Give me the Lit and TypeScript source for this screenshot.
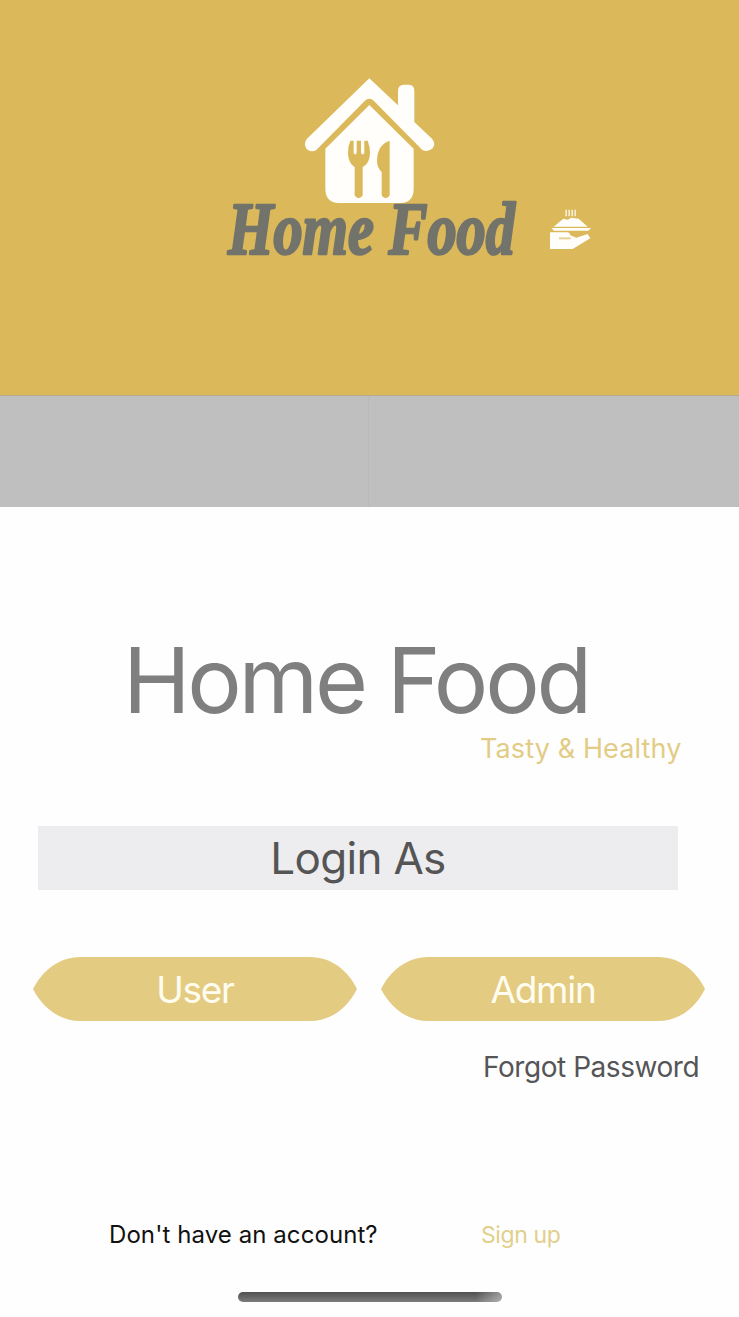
import { LitElement, html, css } from "lit";
import { customElement } from "lit/decorators.js";

@customElement("app-root")
export class AppRoot extends LitElement {
  static styles = css`
    :host { display: block; width: 739px; height: 1317px; overflow: hidden; background: #fefefe; font-family: Inter, "Liberation Sans", sans-serif; }
    * { box-sizing: border-box; }
    .screen { display: flex; flex-direction: column; height: 1317px; }
    .hero { height: 395px; background: #dbb85a; flex: none; }
    .hero svg { display: block; }
    .wordmark { font-family: "Liberation Serif", serif; font-weight: 700; font-style: italic; font-size: 74px; }
    .tabs { display: grid; grid-template-columns: 369px 1fr; height: 112px; flex: none; border-top: 1px solid #b3aa91; background: #bfbfbf; }
    .tab:first-child { border-right: 1px solid #bababa; }
    .main { display: flex; flex-direction: column; white-space: nowrap; }
    h1 { margin: 133px 0 0 123px; height: 80px; line-height: 80px; font-size: 91px; font-weight: 400; color: #7e7f7e; letter-spacing: -3.3px; }
    .tagline { margin: 13px 0 0 480px; height: 32px; line-height: 32px; font-size: 27px; color: #e2cc85; letter-spacing: 0.12px; }
    .login { margin: 61px 0 0 38px; width: 640px; height: 64px; line-height: 65px; background: #ededef; color: #555; font-size: 44px; text-align: center; letter-spacing: -0.7px; }
    .choices { display: flex; gap: 24px; margin: 67px 0 0 33px; }
    button { width: 324px; height: 64px; padding: 0; border: 0; background: #e4cb82; color: #fffdf0; font: 400 37px/65px Inter, "Liberation Sans", sans-serif; letter-spacing: -1.3px; clip-path: path("M0 32C9 14 26 0 47 0H277C299 0 315 14 324 32C315 50 299 64 277 64H47C26 64 9 50 0 32Z"); }
    .forgot { margin: 28px 0 0 483px; height: 36px; line-height: 36px; font-size: 28px; color: #555557; letter-spacing: -0.45px; }
    .account { display: flex; margin: 134px 0 0 109px; height: 32px; line-height: 32px; font-size: 24px; color: #111; }
    .question { width: 372px; letter-spacing: 0.08px; }
    .signup { color: #e2cf8b; font-size: 23px; letter-spacing: -0.4px; }
    .home { margin: 41px 0 0 238px; width: 264px; height: 10px; border-radius: 5px; background: linear-gradient(90deg, transparent 90%, #ffffff66), linear-gradient(#505050, #7c7c7c); }
  `;

  render() {
    return html`
      <div class="screen">
        <header class="hero">
          <svg width="739" height="395" viewBox="0 0 739 395" role="img" aria-label="Home Food logo">
            <g transform="translate(290 70) scale(.33333)" fill="#fffefa">
              <path d="M238 25L324 106V62Q324 44 342 44H356Q373 44 373 62V156L426 206Q438 220 428 235Q414 248 397 240L252 93Q238 79 224 93L79 240Q63 249 50 237Q39 221 51 206Z"/>
              <path d="M238 105L371 236V355Q371 399 332 399H146Q106 399 106 355V236Z"/>
              <g fill="#dbb85a">
                <path d="M181 212H233Q240 229 240 250Q239 281 218 291V376Q215 384 206 385Q197 384 194 376V291Q176 281 174 252Q173 230 181 212Z"/>
                <path d="M299 212V376Q296 384 287 385Q278 384 275 376V306Q261 292 261 272Q262 224 299 212Z"/>
              </g>
              <path d="M191 209H200V250Q195 257 191 250ZM213 209H223V250Q218 257 213 250Z"/>
            </g>
            <text class="wordmark" x="228" y="254" textLength="287" lengthAdjust="spacingAndGlyphs" fill="#72736b" stroke="#72736b" stroke-width="2.6" stroke-linejoin="round">Home Food</text>
            <g transform="translate(540 200) scale(.33333)" fill="#fffefa">
              <path d="M76 29H81V49H76ZM85 29H90V49H85ZM94 29H99V49H94ZM103 29H108V49H103Z" opacity=".75"/>
              <path d="M41 80L70 56L83 59L94 53L116 56L143 80ZM34 84H153L145 92H42ZM30 97H83Q91 99 91 106L109 113L143 102L151 115L98 147H30Z"/>
              <path d="M57 112H92V118H57Z" fill="#dbb85a" opacity=".65"/>
            </g>
          </svg>
        </header>
        <div class="tabs"><div class="tab"></div><div class="tab"></div></div>
        <main class="main">
          <h1>Home Food</h1>
          <div class="tagline">Tasty &amp; Healthy</div>
          <div class="login">Login As</div>
          <div class="choices"><button>User</button><button>Admin</button></div>
          <div class="forgot">Forgot Password</div>
          <div class="account"><span class="question">Don't have an account?</span><span class="signup">Sign up</span></div>
          <div class="home"></div>
        </main>
      </div>`;
  }
}
